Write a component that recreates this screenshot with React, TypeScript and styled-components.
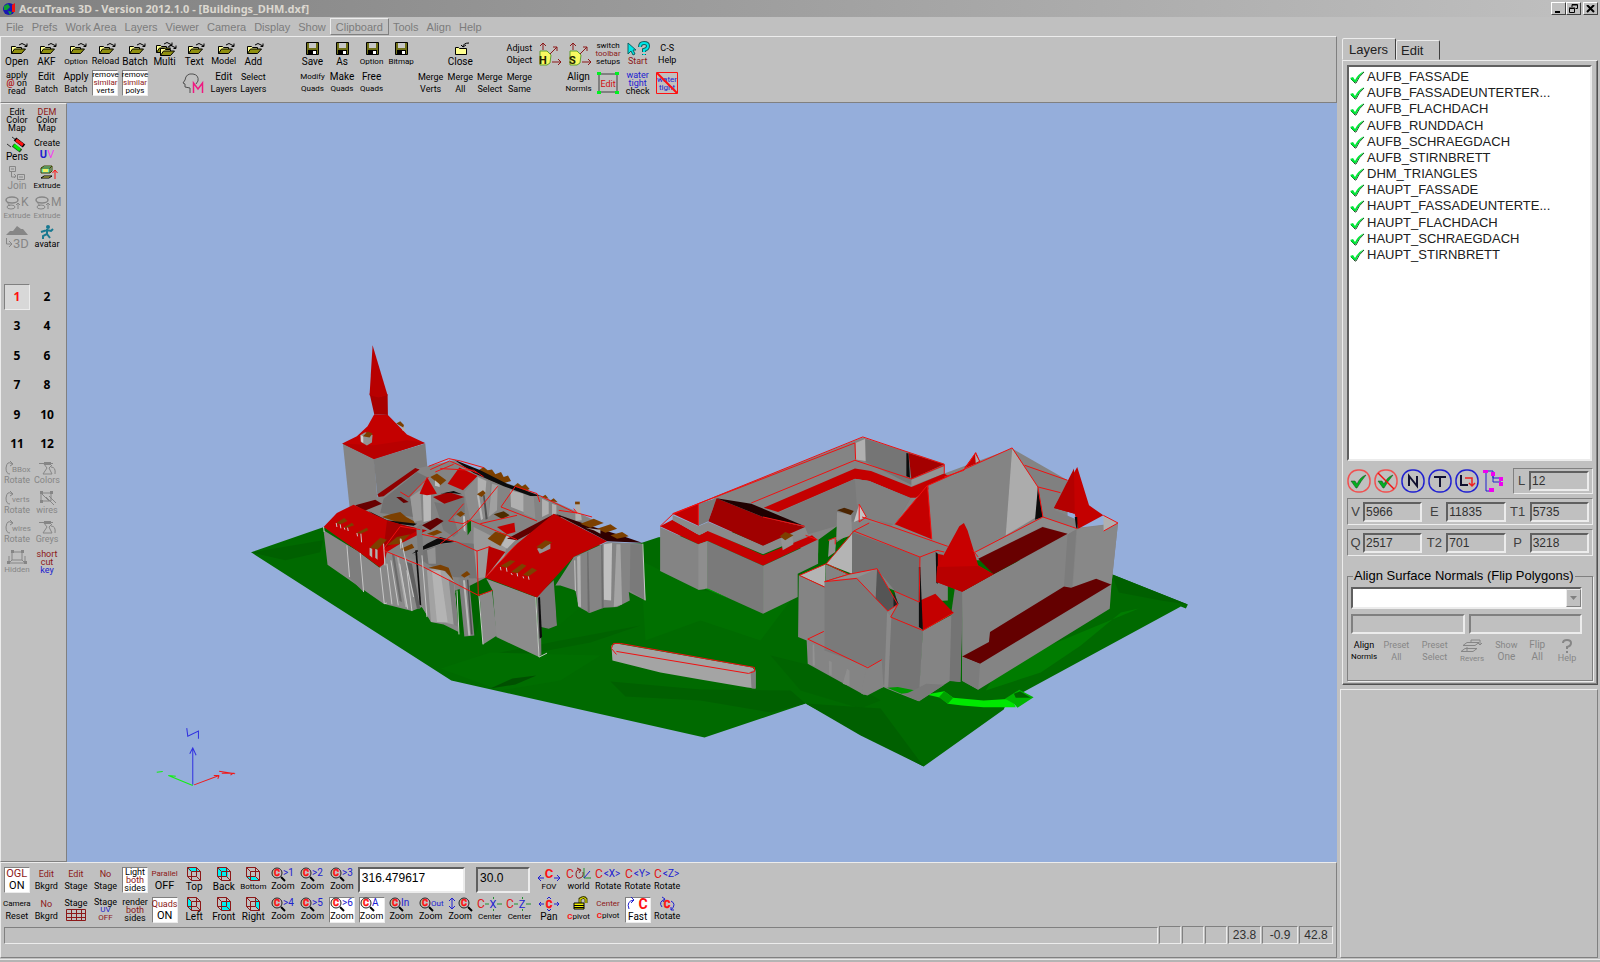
import React, { useState } from 'react';
import styled, { createGlobalStyle, css } from 'styled-components';

const face = '#c0c0c0';
const dark = '#808080';
const light = '#ececec';
const maroon = '#8c1818';
const blue = '#2020d0';
const red = '#ff1010';
const grey = '#868686';

const sunken = css`
  border: 1px solid;
  border-color: ${dark} ${light} ${light} ${dark};
`;
const raised = css`
  border: 1px solid;
  border-color: ${light} ${dark} ${dark} ${light};
`;

const GlobalStyle = createGlobalStyle`
  * { box-sizing: border-box; }
  body { margin: 0; background: ${face}; font-family: "Liberation Sans", Arial, sans-serif; color: #000; }
  button, input, select { font: inherit; color: inherit; margin: 0; padding: 0; }
`;

/* ---------- frame ---------- */

const Window = styled.div`
  display: flex;
  flex-direction: column;
  min-height: 100vh;
  background: ${face};
`;
const TitleBar = styled.header`
  display: flex;
  align-items: center;
  height: 17px;
  padding: 0 2px 0 3px;
  gap: 2px;
  background: linear-gradient(90deg, #808080, #c0c0c0);
`;
const Title = styled.h1`
  flex: 1;
  margin: 0;
  font: bold 11px/16px "Noto Sans", sans-serif;
  color: #dcd8d0;
`;
const WindowButton = styled.button<{ $apart?: boolean }>`
  width: 15px;
  height: 13px;
  margin-left: ${p => (p.$apart ? 0 : -2)}px;
  background: ${face};
  border: 1px solid;
  border-color: #fff #404040 #404040 #fff;
  display: grid;
  place-items: center;
`;
const MenuBar = styled.nav`
  display: flex;
  align-items: center;
  height: 19px;
  padding-left: 2px;
`;
const MenuItem = styled.button<{ $raised?: boolean }>`
  height: 17px;
  padding: 0 ${p => (p.$raised ? 5 : 3)}px;
  background: none;
  font-size: 11px;
  line-height: 17px;
  color: #7c7c7c;
  border: 1px solid transparent;
  ${p => p.$raised && raised}
`;
const Body = styled.div`
  display: flex;
  flex: 1;
  gap: 3px;
`;
const Workspace = styled.main`
  flex: 1;
  min-width: 0;
  display: flex;
  flex-direction: column;
`;
const Toolbar = styled.section`
  ${raised}
  padding: 4px 1px 6px;
`;
const ToolGrid = styled.div<{ $gap: number }>`
  display: grid;
  width: 680px;
  grid-template-columns: repeat(23, 1fr);
  grid-auto-rows: 26px;
  row-gap: ${p => p.$gap}px;
  justify-items: center;
`;
const Middle = styled.div`
  flex: 1;
  display: flex;
`;
const SideBar = styled.section`
  width: 67px;
  ${raised}
  padding: 1px;
`;
const SideGrid = styled.div`
  display: grid;
  width: 60px;
  height: 472px;
  grid-template-columns: 1fr 1fr;
  grid-template-rows: repeat(16, 1fr);
  place-items: center;
`;
const Viewport = styled.div`
  flex: 1;
  min-width: 0;
  display: flex;
  background: #95aedb;
  svg { width: 100%; height: 100%; min-height: 600px; }
`;
const BottomPanel = styled.section`
  ${raised}
  padding: 4px 1px 13px;
`;
const WindowEdge = styled.footer`
  height: 5px;
  border-top: 1px solid ${face};
  background: linear-gradient(#e8e8e8 0 1px, #b4b4b4 1px);
`;

/* ---------- tool tiles ---------- */

const Tile = styled.button<{ $on?: boolean; $off?: boolean; $col?: number; $row?: number }>`
  grid-column: ${p => p.$col ?? 'auto'};
  grid-row: ${p => p.$row ?? 'auto'};
  display: flex;
  flex-direction: column;
  align-items: center;
  justify-content: center;
  width: 26px;
  height: 26px;
  border: 1px solid transparent;
  white-space: nowrap;
  background: none;
  color: ${p => (p.$off ? grey : '#000')};
  font-family: Roboto, "Liberation Sans", sans-serif;
  ${p => p.$on && css`
    background: #fff;
    border-color: ${dark} ${light} ${light} ${dark};
  `}
  svg { flex: none; overflow: visible; }
`;
const Line = styled.span<{ $size: number; $lh: number; $color?: string }>`
  font-size: ${p => p.$size}px;
  line-height: ${p => p.$lh}px;
  color: ${p => p.$color ?? 'inherit'};
`;
const Initial = styled.b<{ $color?: string }>`
  color: ${p => p.$color};
`;
const NumberTile = styled(Tile)`
  font: bold 12px/24px "Noto Sans", sans-serif;
  ${p => p.$on && css`
    color: ${red};
    background: #d8d8d8;
  `}
`;

/* A line is its text, size and colour; with a fourth entry the third one colours
   the first letter only and the fourth colours the rest. */
type Text = [string, number, string?, string?];
type Tool = { at?: [number, number]; icon?: React.ReactNode; text: Text[]; on?: boolean; off?: boolean };

function ToolTile({ at, icon, text, on, off }: Tool) {
  const lh = icon ? 11 : Math.floor(24 / Math.max(text.length, 2));
  return (
    <Tile type="button" $on={on} $off={off} disabled={off} $col={at?.[0]} $row={at?.[1]}>
      {icon}
      {text.map(([t, size, color, rest]) => (
        <Line key={t} $size={size} $lh={lh} $color={rest ?? color}>
          {rest ? <><Initial $color={color}>{t[0]}</Initial>{t.slice(1)}</> : t}
        </Line>
      ))}
    </Tile>
  );
}

const Glyph = ({ children, h = 14 }: { children: React.ReactNode; h?: number }) => (
  <svg width="28" height={h} viewBox={`0 0 28 ${h}`} fill="none" stroke="#000" aria-hidden="true" fontFamily="Roboto, sans-serif">{children}</svg>
);

/* ---------- icons ---------- */

const FolderShape = () => (
  <>
    <path d="M8.500 11.500v-7h4l1 1h5v2" fill="#ffff90" />
    <path d="M8.500 11.500l3-4.500h11l-4 4.500z" fill="#909010" />
    <path d="M16 3q3-3 6 0l2 1M21.500 4.500h2.500v-3" />
  </>
);
const Folder = () => <Glyph><FolderShape /></Glyph>;
const Folders = () => (
  <Glyph>
    <g transform="translate(-3 -1)"><FolderShape /></g>
    <g transform="translate(1 2)"><FolderShape /></g>
  </Glyph>
);
const ClosedFolder = () => (
  <Glyph>
    <path d="M9.500 12.500v-7h3l1 1h7v6z" fill="#ffff90" />
    <path d="M17 5q0-4 6-4M17 5l-2-2M17 5l3-2" />
  </Glyph>
);
const Disk = () => (
  <Glyph>
    <path d="M8.500 0.500h12v12h-12z" fill="#707018" />
    <path d="M11 1h7v5h-7z" fill="#c8c8c8" stroke="none" />
    <path d="M10 8h9v5h-9z" fill="#000" stroke="none" />
    <path d="M15 9h3v3h-3z" fill="#fff" stroke="none" />
  </Glyph>
);
const HeadM = () => (
  <Glyph h={24}>
    <path d="M10 22v-5l-5-1v-3l-2-1 2-3q1-7 8-6 6 1 5 7l-2 3" stroke="#505050" />
    <path d="M13.500 22v-10l4.500 6 4.500-6v10" stroke="#f01880" strokeWidth="1.500" />
  </Glyph>
);
const Blob = ({ letter }: { letter: string }) => (
  <Glyph h={24}>
    <path d="M8 1v7M5 4l3-3 3 3M15 12l7-7M18 5h4v4M17 20h9M23 17l3 3-3 3" stroke={maroon} />
    <path d="M5 9h7l4 4-1 8-3 2h-7z" fill="#f8f860" stroke="#60a030" />
    <text x="4" y="22" fontSize="11" fontWeight="bold" fill="#202000" stroke="none">{letter}</text>
  </Glyph>
);
const PointerHelp = () => (
  <Glyph>
    <path d="M4 1v11l3-3 2 4 2-1-2-4h3z" fill="#00e8e8" stroke="#106060" />
    <path d="M16 5q0-4 4-4t4 3-4 4v2M20 12v1" stroke="#106060" strokeWidth="4" />
    <path d="M16 5q0-4 4-4t4 3-4 4v2M20 12v1" stroke="#00e8e8" strokeWidth="2" />
  </Glyph>
);
const EditFrame = () => (
  <Glyph h={24}>
    <path d="M5 3h18v18h-18z" stroke="#404040" />
    <path d="M3 1h4v3h-4zM21 1h4v3h-4zM3 20h4v3h-4zM21 20h4v3h-4z" fill="#00f020" stroke="none" />
    <text x="14" y="16" fontSize="9" textAnchor="middle" fill="#d01010" stroke="none">Edit</text>
  </Glyph>
);
const NotWaterTight = () => (
  <Glyph h={24}>
    <text x="14" y="11" fontSize="8" textAnchor="middle" fill={blue} stroke="none">water</text>
    <text x="14" y="19" fontSize="8" textAnchor="middle" fill={blue} stroke="none">tight</text>
    <path d="M3.500 1.500h21v21h-21z" stroke={red} /><path d="M4 2l20 20" stroke={red} strokeWidth="2" />
  </Glyph>
);
const Pens = () => (
  <Glyph>
    <path d="M9 0l4 3M4 7l4 3" stroke="#303030" />
    <path d="M12 2l9 7" stroke="#000" strokeWidth="4" />
    <path d="M13 3l7 5" stroke={red} strokeWidth="3" />
    <path d="M10 8l8 6" stroke="#205020" strokeWidth="4" />
    <path d="M11 8l6 5" stroke="#00f000" strokeWidth="3" />
  </Glyph>
);
const JoinBoxes = () => (
  <Glyph>
    <path d="M6.500 0.500h6v5h-6zM14.500 8.500h7v5h-7zM8 3h3M16 11h4M8.500 6v5h4M11 8l2 2-2 2" stroke={grey} />
  </Glyph>
);
const ExtrudeBox = () => (
  <Glyph>
    <path d="M8 2l3-2h8l-2 2v5h-9zM8 2h9M17 7l2-2v-5" fill="#70e8b0" stroke="#404000" />
    <path d="M10 3h5v3h-5z" fill="#f0f060" stroke="none" />
    <path d="M8 12l3-2h8l-3 2z" fill="#f0f060" stroke="#000" />
    <path d="M22 13v-9M19.500 7l2.500-3 2.500 3" stroke={red} />
  </Glyph>
);
const ExtrudeRing = ({ letter }: { letter: string }) => (
  <Glyph>
    <ellipse cx="9" cy="4" rx="6" ry="3" stroke={grey} strokeWidth="1.500" />
    <ellipse cx="8" cy="11" rx="4" ry="2" stroke={grey} />
    <path d="M4 6l3 4M15 13v-5M13 9l2-2 2 2" stroke={grey} />
    <text x="18" y="10" fontSize="12" fill={grey} stroke="none">{letter}</text>
  </Glyph>
);
const Terrain = () => (
  <Glyph h={11}><path d="M3 9l4-4 3 0 4-5 4 3 2 0 5 6z" fill={grey} stroke="none" /></Glyph>
);
const To3D = () => (
  <Glyph h={13}>
    <path d="M3.500 1v6h5M6 4l3 3-3 3" stroke={grey} />
    <text x="10" y="11" fontSize="13" fill={grey} stroke="none">3D</text>
  </Glyph>
);
const Avatar = () => (
  <Glyph>
    <path d="M14 4v5l-4 2v3M14 9l3 4M8 7l6-2 4 1 2-2" stroke="#187890" strokeWidth="2" />
    <circle cx="15" cy="2" r="2" fill="#187890" stroke="none" />
  </Glyph>
);
const GreyTurn = ({ label }: { label: string }) => (
  <Glyph>
    <path d="M9 3q-5-4-6 4 0 6 4 6M7 0l3 3-3 2" stroke={grey} />
    <text x="9" y="11" fontSize="8" fill={grey} stroke="none">{label}</text>
  </Glyph>
);
const Spray = () => (
  <Glyph>
    <path d="M6 2.500h14M11 3l3 4-4 6h9l-3-6 3-3M18 6q5 0 4 7" stroke={grey} />
    <path d="M11 1h7v3h-7z" fill={grey} stroke="none" />
  </Glyph>
);
const WirePen = () => (
  <Glyph>
    <path d="M8 2h10v8h-10zM8 2l8 8M13 6l8 8M16 5l7 7" stroke={grey} />
    <path d="M7 0h3v3h-3zM17 0h3v3h-3zM7 9h3v3h-3z" fill={grey} stroke="none" />
  </Glyph>
);
const HiddenBox = () => (
  <Glyph>
    <path d="M9 2h10v8h-10zM9 10l-3 3M19 10l3 3M22 13h-16M6 6v7M22 6v7" stroke={grey} />
    <path d="M8 0h3v3h-3zM18 0h3v3h-3zM4 11h3v3h-3zM21 11h3v3h-3z" fill={grey} stroke="none" />
  </Glyph>
);
const faces: Record<string, string> = {
  Top: 'M7 1h9l4 4h-9z', Back: 'M8 1h10v9h-10z', Bottom: 'M7 10h9l4 3h-9z',
  Left: 'M8 1l3 3v9l-3-3z', Front: 'M11 5h9v8h-9z', Right: 'M17 2l3 3v8l-3-3z',
};
const Cube = ({ side }: { side: string }) => (
  <Glyph>
    <path d={faces[side]} fill="#00f0f0" stroke="none" />
    <path d="M7.500 0.500h9v9h-9zM11.500 4.500h9v9h-9zM7.500 0.500l4 4M16.500 0.500l4 4M7.500 9.500l4 4M16.500 9.500l4 4" stroke={maroon} />
  </Glyph>
);
const Lens = ({ x = 8 }: { x?: number }) => (
  <>
    <circle cx={x} cy="6" r="5" stroke="#202020" />
    <path d={`M${x + 4} 10l4 4`} strokeWidth="2" />
    <text x={x} y="9" fontSize="9" fontWeight="bold" textAnchor="middle" fill={red} stroke={red} strokeWidth="0.500">C</text>
  </>
);
const Zoom = ({ tag }: { tag: string }) => (
  <Glyph>
    <Lens />
    <text x="14" y="9" fontSize={tag.length > 2 ? 8 : 10} fill={blue} stroke="none">{tag}</text>
  </Glyph>
);
const ZoomDrag = () => (
  <Glyph>
    <path d="M6 1v11M3 4l3-3 3 3M3 9l3 3 3-3" stroke={blue} />
    <Lens x={18} />
  </Glyph>
);
const CameraAxis = ({ axis, color = blue }: { axis: string; color?: string }) => (
  <Glyph>
    <text x="1" y="11" fontSize="12" fill="#e01818" stroke="none">C</text>
    <text x="18" y="10" fontSize="10" textAnchor="middle" fill={color} stroke="none">{axis}</text>
  </Glyph>
);
const CenterAxis = ({ axis }: { axis: string }) => (
  <Glyph>
    <text x="1" y="11" fontSize="12" fill="#e01818" stroke="none">C</text>
    <path d="M9 7h4M21 7h5M17.500 0v2M17.500 12v2" stroke="#209030" />
    <text x="17" y="11" fontSize="11" textAnchor="middle" fill={blue} stroke="none">{axis}</text>
  </Glyph>
);
const Fov = () => (
  <Glyph>
    <path d="M9 11h-6M6 8l-3 3 3 3M19 11h6M22 8l3 3-3 3" stroke={blue} />
    <text x="14" y="11" fontSize="13" fontWeight="bold" textAnchor="middle" fill={red} stroke="none">C</text>
  </Glyph>
);
const WorldAxes = () => (
  <Glyph>
    <text x="1" y="11" fontSize="12" fill="#e01818" stroke="none">C</text>
    <path d="M15 3q-4-1-4 4t4 4 3-6M12 1l4 2-2 3" stroke={maroon} />
    <path d="M19 1v10h7" stroke="#209030" /><path d="M19 11l6-7" stroke={blue} />
  </Glyph>
);
const Pan = () => (
  <Glyph>
    <path d="M9 7h-5M6 5l-2 2 2 2M19 7h5M22 5l2 2-2 2M12 2l2-2 2 2M12 12l2 2 2-2" stroke={blue} />
    <text x="14" y="11" fontSize="10" fontWeight="bold" textAnchor="middle" fill={red} stroke={red} strokeWidth="0.500">C</text>
  </Glyph>
);
const Padlock = () => (
  <Glyph>
    <path d="M15 6v-4q4-3 6 0v4" stroke="#404000" strokeWidth="3" />
    <path d="M15 6v-4q4-3 6 0v4" stroke="#f0f000" />
    <path d="M9 6h10v6h-10z" fill="#f0f000" /><path d="M9 8.500h10M9 10.500h10" />
  </Glyph>
);
const FastTurn = () => (
  <Glyph>
    <path d="M5 12q-3-8 5-9M7 0l3 3-3 3" stroke={blue} />
    <text x="19" y="12" fontSize="14" fontWeight="bold" textAnchor="middle" fill={red} stroke="none">C</text>
  </Glyph>
);
const SlowTurn = () => (
  <Glyph>
    <path d="M9 10q-4-5 3-8M9 0l3 2-2 3M18 4q6 3 0 9M21 13h-3v-3" stroke={blue} />
    <text x="14" y="11" fontSize="10" fontWeight="bold" textAnchor="middle" fill={red} stroke={red} strokeWidth="0.500">C</text>
  </Glyph>
);
const GridMesh = () => (
  <Glyph h={12}><path d="M4.500 0.500h19v11h-19zM4 4.500h20M4 8.500h20M9.500 0v12M14.500 0v12M19.500 0v12" stroke={maroon} /></Glyph>
);
const Reverse = () => (
  <Glyph>
    <path d="M9 3.500h12l-4 3h-12zM7 9.500h12l-4 3h-12zM13 3v-2h9v5M20 4l2 2 2-2M9 12v-4" stroke={grey} />
  </Glyph>
);
const Question = () => (
  <Glyph>
    <path d="M10 4q0-3 4-3t4 3-4 4v2M14 12v2" stroke={grey} strokeWidth="2" />
  </Glyph>
);
const Tick = () => (
  <svg width="15" height="14" viewBox="0 0 15 14" fill="none" aria-hidden="true">
    <path d="M1 9l4 4 1 0q3-7 8-11" stroke="#205028" />
    <path d="M0 8l3-1 2 3q3-6 9-9-5 5-8 11h-2z" fill="#00e838" />
  </svg>
);

/* ---------- tool data ---------- */

const topTools: Tool[] = [
  { at: [1, 1], icon: <Folder />, text: [['Open', 10]] },
  { at: [2, 1], icon: <Folder />, text: [['AKF', 10]] },
  { at: [3, 1], icon: <Folder />, text: [['Option', 8]] },
  { at: [4, 1], icon: <Folder />, text: [['Reload', 9]] },
  { at: [5, 1], icon: <Folder />, text: [['Batch', 10]] },
  { at: [6, 1], icon: <Folders />, text: [['Multi', 10]] },
  { at: [7, 1], icon: <Folder />, text: [['Text', 10]] },
  { at: [8, 1], icon: <Folder />, text: [['Model', 9]] },
  { at: [9, 1], icon: <Folder />, text: [['Add', 10]] },
  { at: [11, 1], icon: <Disk />, text: [['Save', 10]] },
  { at: [12, 1], icon: <Disk />, text: [['As', 10]] },
  { at: [13, 1], icon: <Disk />, text: [['Option', 8]] },
  { at: [14, 1], icon: <Disk />, text: [['Bitmap', 8]] },
  { at: [16, 1], icon: <ClosedFolder />, text: [['Close', 10]] },
  { at: [18, 1], text: [['Adjust', 9], ['Object', 9]] },
  { at: [19, 1], icon: <Blob letter="H" />, text: [] },
  { at: [20, 1], icon: <Blob letter="S" />, text: [] },
  { at: [21, 1], text: [['switch', 8], ['toolbar', 8, maroon], ['setups', 8]] },
  { at: [22, 1], icon: <PointerHelp />, text: [['Start', 9, maroon]] },
  { at: [23, 1], text: [['C-S', 9], ['Help', 9]] },
  { at: [1, 2], text: [['apply', 9], ['@ on', 9, '#b01818', '#000']  , ['read', 9]] },
  { at: [2, 2], text: [['Edit', 10], ['Batch', 9]] },
  { at: [3, 2], text: [['Apply', 10], ['Batch', 9]] },
  { at: [4, 2], on: true, text: [['remove', 8], ['similar', 8, maroon], ['verts', 8]] },
  { at: [5, 2], on: true, text: [['remove', 8], ['similar', 8, maroon], ['polys', 8]] },
  { at: [7, 2], icon: <HeadM />, text: [] },
  { at: [8, 2], text: [['Edit', 10], ['Layers', 9]] },
  { at: [9, 2], text: [['Select', 9], ['Layers', 9]] },
  { at: [11, 2], text: [['Modify', 8], ['Quads', 8]] },
  { at: [12, 2], text: [['Make', 10], ['Quads', 8]] },
  { at: [13, 2], text: [['Free', 10], ['Quads', 8]] },
  { at: [15, 2], text: [['Merge', 9], ['Verts', 9]] },
  { at: [16, 2], text: [['Merge', 9], ['All', 9]] },
  { at: [17, 2], text: [['Merge', 9], ['Select', 9]] },
  { at: [18, 2], text: [['Merge', 9], ['Same', 9]] },
  { at: [20, 2], text: [['Align', 10], ['Normls', 8]] },
  { at: [21, 2], icon: <EditFrame />, text: [] },
  { at: [22, 2], text: [['water', 9, blue], ['tight', 9, blue], ['check', 9]] },
  { at: [23, 2], icon: <NotWaterTight />, text: [] },
];

const sideTools: Tool[] = [
  { text: [['Edit', 9], ['Color', 9], ['Map', 9]] },
  { text: [['DEM', 9, maroon], ['Color', 9], ['Map', 9]] },
  { icon: <Pens />, text: [['Pens', 10]] },
  { text: [['Create', 9], ['UV', 11, blue, '#f040f0']] },
  { icon: <JoinBoxes />, text: [['Join', 10]], off: true },
  { icon: <ExtrudeBox />, text: [['Extrude', 8]] },
  { icon: <ExtrudeRing letter="K" />, text: [['Extrude', 8]], off: true },
  { icon: <ExtrudeRing letter="M" />, text: [['Extrude', 8]], off: true },
  { icon: <><Terrain /><To3D /></>, text: [], off: true },
  { icon: <Avatar />, text: [['avatar', 9]] },
];
const sideLower: Tool[] = [
  { icon: <GreyTurn label="BBox" />, text: [['Rotate', 9]], off: true },
  { icon: <Spray />, text: [['Colors', 9]], off: true },
  { icon: <GreyTurn label="verts" />, text: [['Rotate', 9]], off: true },
  { icon: <WirePen />, text: [['wires', 9]], off: true },
  { icon: <GreyTurn label="wires" />, text: [['Rotate', 9]], off: true },
  { icon: <Spray />, text: [['Greys', 9]], off: true },
  { icon: <HiddenBox />, text: [['Hidden', 8]], off: true },
  { text: [['short', 9, maroon], ['cut', 9, maroon], ['key', 9, blue]] },
];

const bottomTools: Tool[] = [
  { at: [1, 1], on: true, text: [['OGL', 11, maroon], ['ON', 11]] },
  { at: [2, 1], text: [['Edit', 9, maroon], ['Bkgrd', 9]] },
  { at: [3, 1], text: [['Edit', 9, maroon], ['Stage', 9]] },
  { at: [4, 1], text: [['No', 9, maroon], ['Stage', 9]] },
  { at: [5, 1], on: true, text: [['Light', 9], ['both', 9, maroon], ['sides', 9]] },
  { at: [6, 1], text: [['Parallel', 8, maroon], ['OFF', 11]] },
  { at: [7, 1], icon: <Cube side="Top" />, text: [['Top', 10]] },
  { at: [8, 1], icon: <Cube side="Back" />, text: [['Back', 10]] },
  { at: [9, 1], icon: <Cube side="Bottom" />, text: [['Bottom', 8]] },
  { at: [10, 1], icon: <Zoom tag=">1" />, text: [['Zoom', 9]] },
  { at: [11, 1], icon: <Zoom tag=">2" />, text: [['Zoom', 9]] },
  { at: [12, 1], icon: <Zoom tag=">3" />, text: [['Zoom', 9]] },
  { at: [19, 1], icon: <Fov />, text: [['FOV', 8]] },
  { at: [20, 1], icon: <WorldAxes />, text: [['world', 9]] },
  { at: [21, 1], icon: <CameraAxis axis="<X>" />, text: [['Rotate', 9]] },
  { at: [22, 1], icon: <CameraAxis axis="<Y>" />, text: [['Rotate', 9]] },
  { at: [23, 1], icon: <CameraAxis axis="<Z>" />, text: [['Rotate', 9]] },
  { at: [1, 2], text: [['Camera', 8], ['Reset', 9]] },
  { at: [2, 2], text: [['No', 9, maroon], ['Bkgrd', 9]] },
  { at: [4, 2], text: [['Stage', 9], ['UV', 8, blue], ['OFF', 8, maroon]] },
  { at: [5, 2], text: [['render', 9], ['both', 9, maroon], ['sides', 9]] },
  { at: [6, 2], on: true, text: [['Quads', 9, maroon], ['ON', 11]] },
  { at: [7, 2], icon: <Cube side="Left" />, text: [['Left', 10]] },
  { at: [8, 2], icon: <Cube side="Front" />, text: [['Front', 10]] },
  { at: [9, 2], icon: <Cube side="Right" />, text: [['Right', 10]] },
  { at: [10, 2], icon: <Zoom tag=">4" />, text: [['Zoom', 9]] },
  { at: [11, 2], icon: <Zoom tag=">5" />, text: [['Zoom', 9]] },
  { at: [12, 2], on: true, icon: <Zoom tag=">6" />, text: [['Zoom', 9]] },
  { at: [13, 2], on: true, icon: <Zoom tag=" A" />, text: [['Zoom', 9]] },
  { at: [14, 2], icon: <Zoom tag="In" />, text: [['Zoom', 9]] },
  { at: [15, 2], icon: <Zoom tag="Out" />, text: [['Zoom', 9]] },
  { at: [16, 2], icon: <ZoomDrag />, text: [['Zoom', 9]] },
  { at: [17, 2], icon: <CenterAxis axis="X" />, text: [['Center', 8]] },
  { at: [18, 2], icon: <CenterAxis axis="Z" />, text: [['Center', 8]] },
  { at: [19, 2], icon: <Pan />, text: [['Pan', 10]] },
  { at: [20, 2], icon: <Padlock />, text: [['Cpivot', 8, red, '#000']] },
  { at: [21, 2], text: [['Center', 8, maroon], ['Cpivot', 8, red, '#000']] },
  { at: [22, 2], on: true, icon: <FastTurn />, text: [['Fast', 10]] },
  { at: [23, 2], icon: <SlowTurn />, text: [['Rotate', 9]] },
];

const alignTools: Tool[] = [
  { text: [['Align', 9], ['Normls', 8]] },
  { text: [['Preset', 9], ['All', 9]], off: true },
  { text: [['Preset', 9], ['Select', 9]], off: true },
  { icon: <Reverse />, text: [['Revers', 8]], off: true },
  { text: [['Show', 9], ['One', 10]], off: true },
  { text: [['Flip', 10], ['All', 10]], off: true },
  { icon: <Question />, text: [['Help', 9]], off: true },
];

/* ---------- bottom panel parts ---------- */

const Field = styled.input`
  min-width: 0;
  width: 100%;
  border: 2px solid;
  border-color: #606060 ${light} ${light} #606060;
  border-radius: 0;
  padding: 0 2px;
  font-size: 12px;
  outline: none;
`;
const FocalField = styled(Field)`
  grid-area: 1 / 13 / 2 / 17;
  justify-self: start;
  width: 107px;
  margin-left: 1px;
  padding-bottom: 4px;
  background: #fff;
`;
const AngleField = styled(Field)`
  grid-area: 1 / 17 / 2 / 19;
  justify-self: start;
  width: 54px;
  margin-left: 1px;
  padding-bottom: 4px;
  background: ${face};
`;
const StageMeshTile = styled(Tile)`
  justify-content: flex-start;
`;
const StatusBar = styled.div`
  display: flex;
  align-items: flex-end;
  gap: 1px;
  height: 18px;
  margin: 3px 2px 0;
`;
const StatusMessage = styled.div`
  flex: 1;
  height: 17px;
  ${sunken}
`;
const StatusCell = styled.div<{ $w: number }>`
  width: ${p => p.$w}px;
  height: 18px;
  ${sunken}
  font-size: 12px;
  line-height: 17px;
  text-align: center;
  color: #303030;
`;

/* ---------- right panel ---------- */

const Inspector = styled.aside`
  width: 260px;
  display: flex;
  flex-direction: column;
  padding: 2px 2px 0 2px;
`;
const Tabs = styled.div`
  display: flex;
  align-items: flex-end;
  height: 22px;
`;
const Tab = styled.button<{ $active?: boolean }>`
  height: ${p => (p.$active ? 22 : 20)}px;
  width: ${p => (p.$active ? 54 : 44)}px;
  padding-left: ${p => (p.$active ? 6 : 4)}px;
  text-align: left;
  font-size: 13px;
  color: #202020;
  background: ${face};
  border: 1px solid;
  border-color: ${light} #404040 transparent ${light};
  border-radius: 2px 2px 0 0;
`;
const TabPage = styled.div`
  border: 1px solid;
  border-color: ${light} #505050 #505050 ${light};
  box-shadow: inset -1px -1px ${dark};
  padding: 4px 4px 3px;
  display: flex;
  flex-direction: column;
  gap: 4px;
`;
const LayerList = styled.ul`
  height: 396px;
  margin: 0 1px 3px 0;
  padding: 2px 1px;
  list-style: none;
  background: #fff;
  border: 2px solid;
  border-color: #606060 ${light} ${light} #606060;
`;
const LayerRows = styled.div`
  display: grid;
  grid-auto-rows: 1fr;
  height: 194px;
`;
const Layer = styled.li`
  display: flex;
  align-items: center;
  gap: 2px;
  font-size: 13px;
  line-height: 16px;
  color: #202020;
`;
const MarkRow = styled.div`
  display: flex;
  align-items: center;
  gap: 3px;
  height: 26px;
`;
const Mark = styled.button`
  width: 24px;
  height: 24px;
  border: 0;
  background: none;
`;
const StatRow = styled.div<{ $single?: boolean }>`
  display: grid;
  grid-template-columns: ${p => (p.$single ? '15px 1fr' : '15px 1fr 24px 1fr 24px 1fr')};
  align-items: center;
  ${p => p.$single && 'width: 80px; margin-left: auto;'}
  height: ${p => (p.$single ? 26 : 27)}px;
  padding: 0 3px 0 0;
  ${sunken}
`;
const StatLabel = styled.label`
  text-align: center;
  font-size: 13px;
  line-height: 16px;
  color: #404040;
`;
const StatField = styled(Field)`
  height: 20px;
  padding: 0 1px;
  background: ${face};
  color: #303030;
`;
const Group = styled.fieldset`
  min-width: 0;
  margin: 8px 0 0;
  padding: 3px 10px 16px 3px;
  border: 1px solid ${dark};
  box-shadow: 1px 1px ${light};
`;
const Legend = styled.legend`
  margin-left: 2px;
  padding: 0 1px;
  font-size: 13px;
  line-height: 16px;
`;
const SelectWrap = styled.div`
  position: relative;
  height: 22px;
`;
const Select = styled.select`
  appearance: none;
  width: 100%;
  height: 22px;
  background: #fff;
  border: 2px solid;
  border-color: #606060 ${light} ${light} #606060;
  border-radius: 0;
`;
const Arrow = styled.span`
  position: absolute;
  right: 1px;
  top: 2px;
  width: 15px;
  height: 18px;
  display: grid;
  place-items: center;
  background: ${face};
  ${raised}
  pointer-events: none;
`;
const FieldPair = styled.div`
  display: grid;
  grid-template-columns: 1fr 1fr;
  gap: 4px;
  margin: 5px 0 4px;
`;
const EmptyField = styled.output`
  height: 20px;
  border: 2px solid;
  border-color: ${dark} ${light} ${light} ${dark};
`;
const AlignRow = styled.div`
  display: grid;
  grid-template-columns: 26fr 39fr 38fr 37fr 32fr 30fr 30fr;
  justify-items: center;
`;
const Filler = styled.div`
  flex: 1;
  margin: 4px 0 0 -2px;
  ${raised}
`;

/* ---------- model ---------- */

type Face = [string, string];
const Faces = ({ list }: { list: Face[] }) => (
  <>{list.map(([fill, points], i) => <polygon key={i} fill={fill} points={points} />)}</>
);
const Edges = ({ list, color = '#f01010' }: { list: string[]; color?: string }) => (
  <g fill="none" stroke={color} strokeWidth="1">
    {list.map((points, i) => <polyline key={i} points={points} vectorEffect="non-scaling-stroke" />)}
  </g>
);

const G1 = '#7a7a7a', G2 = '#848484', G3 = '#939393', G4 = '#b0b0b0', R1 = '#c40000', R2 = '#a80000', R3 = '#680000', B1 = '#7c4000', K = '#0c0c0c';

const terrain: Face[] = [
  ['#006a00', '251,552 323,527 600,545 640,543 658,537 836,524 900,520 1111,574 1187,604 1185,608 1180,606 1007,700 1003,709 923,766 805,703 704,737 451,680'],
  ['#007000', '640,560 700,590 790,600 760,640 700,620 645,640'],
  ['#006200', '440,668 500,652 560,640 640,625 590,642 520,655'],
  ['#006e00', '440,668 490,652 600,655 560,680 500,690'],
  ['#005000', '490,688 512,678 536,675 515,684'],
  ['#006000', '610,681 700,689 790,690 805,703 770,712 700,700 625,696'],
  ['#006000', '251,552 285,560 320,552 323,540'],
  ['#006400', '770,655 830,670 880,700 860,708 800,690'],
  ['#007c00', '1000,665 1138,608 1120,612 1080,645 1040,672 985,690'],
  ['#006000', '1111,574 1187,604 1160,600 1118,592'],
  ['#006000', '805,703 880,708 923,766 860,735'],
];

const church: Face[] = [
  [G2, '308,340 402,386 412,515 415,560 328,530'],
  ['#7c7c7c', '400,386 555,340 562,420 530,415 412,500'],
  [G2, '412,500 530,415 640,390 720,430 900,495 1000,540 1060,570 940,620 830,650 740,740 715,795 650,790 560,740 430,660 330,530'],
  [R1, '306,340 350,318 382,288 402,252 443,254 500,313 554,338 401,386'],
  ['#b80000', '306,340 401,386 554,338 500,330 400,345'],
  [R2, '388,190 402,252 443,254 442,192 415,200'],
  ['#b80000', '397,45 388,195 415,202 442,195'],
  [G3, '361,314 375,306 397,314 395,337 380,346 362,335'],
  ['#d0d0d0', '361,314 369,318 369,338 362,333'],
  [B1, '368,318 382,304 397,310 388,322'],
  [G4, '484,288 493,290 494,303 486,300'], [B1, '468,280 480,273 491,284 489,292'],
  ['#727272', '430,505 500,450 530,425 560,440 510,500 520,560 420,548'],
  ['#900000', '415,500 412,492 525,413 538,418 430,498'],
  [R3, '345,525 405,508 425,520 372,542'],
  [R3, '468,500 482,500 505,515 490,518'],
  ['#9a9a9a', '510,500 540,480 545,570 520,575'],
  ['#b8b8b8', '548,490 572,490 572,570 550,575'],
  [R1, '560,440 538,490 560,495 590,490'],
  ['#767676', '582,515 610,520 672,500 675,590 640,620 610,600'],
  ['#a00000', '578,500 625,485 672,500 612,520'],
  [K, '600,490 640,482 665,492 630,487'],
  [B1, '570,440 590,430 618,450 600,465'],
  ['#c0c0c0', '584,450 598,462 598,470 584,466'],
  [R1, '622,460 657,412 712,437 668,480'],
  ['#8c8c8c', '712,437 750,455 745,560 690,570 672,485'],
  [G4, '712,440 738,452 735,490 712,490'],
  ['#b8b8b8', '710,495 716,495 728,565 722,570'],
  ['#505050', '728,495 733,495 742,565 736,568'],
  [B1, '710,492 728,480 736,488 724,500'],
  ['#a0a0a0', '755,460 772,465 770,540 745,560'],
  [G4, '810,480 850,490 850,545 812,530'],
  ['#909090', '850,490 880,500 885,565 850,550'],
  [G4, '905,505 925,515 925,550 905,560'],
  [G4, '935,520 948,525 948,550 935,555'],
  [B1, '715,420 730,410 742,420 755,418 765,432 782,425 790,440 803,436 812,452 780,462 740,445'],
  [B1, '820,468 832,458 845,468 855,462 868,476 850,484'],
  [B1, '905,500 915,493 925,505'], [B1, '928,512 940,504 952,516'],
  [K, '640,388 720,420 800,460 900,497 870,497 790,468 700,428'],
  ['#b0b0b0', '1005,520 1018,518 1024,570 1005,572'],
  [B1, '1004,514 1018,514 1018,522 1004,522'],
  ['#4c2c00', '760,552 790,543 808,555 785,566'],
  [R1, '770,590 822,577 825,605 800,612'],
  ['#9a9a9a', '700,590 800,640 790,690 740,740 700,745'],
  [B1, '742,625 765,604 800,612 780,647'],
  ['#b8b8b8', '800,614 825,630 800,655 784,645'],
  [G2, '640,560 672,545 680,600 655,610'], [B1, '648,552 662,542 674,550 660,560'], ['#c0c0c0', '668,558 674,558 676,605 670,600'],
  ['#006800', '680,570 692,573 692,600 682,615'],
  ['#600000', '545,585 590,562 610,572 570,600'],
  [B1, '425,560 450,552 480,545 498,560 520,572 525,582 470,575'],
  [K, '385,542 440,570 530,580 520,586 430,576'],
  [B1, '560,610 590,598 606,606 580,616'],
  [K, '515,670 560,640 600,620 648,634 600,640'],
  ['#747474', '520,672 600,642 650,636 700,640 710,745 640,740 560,700'],
  [G3, '560,660 585,650 587,700 565,700'],
  ['#600000', '800,625 940,552 965,558 830,630'],
  ['#888888', '250,600 355,664 418,712 435,660 530,690 570,720 590,740 640,740 655,905 610,882 572,875 545,830 515,842 430,820 262,703'],
  ['#7e7e7e', '318,643 362,668 370,785 330,745'],
  [R1, '250,590 290,548 340,523 440,570 500,588 560,600 480,640 440,665 430,702 418,711 355,664'],
  ['#a40000', '440,572 540,596 480,630 430,655'],
  ['#8a8a8a', '440,665 520,690 560,720 572,870 545,830 500,835 450,820'],
  ['#606060', '500,695 515,700 540,835 530,835'],
  [K, '525,660 530,660 543,825 538,823'],
  [G1, '528,590 545,580 550,690 535,700'],
  ['#a8a8a8', '470,680 476,682 502,830 495,830'],
  ['#6a6a6a', '455,670 462,672 485,815 478,812'],
  ['#a2a2a2', '560,720 600,710 640,750 655,885 615,877 572,875'],
  ['#b4b4b4', '575,722 600,720 622,875 590,875'],
  ['#808080', '625,745 640,755 655,890 640,882'],
  ['#006400', '645,780 690,765 740,740 760,780 725,840 705,915 655,905'],
  ['#808080', '655,745 685,735 702,915 672,918'], ['#b8b8b8', '668,750 674,750 690,915 684,915'], ['#505050', '680,748 684,748 697,912 692,912'],
  [B1, '565,712 600,703 625,712 640,752 615,722'],
  [B1, '662,735 680,722 690,732 672,742'],
  ['#8a8a8a', '718,795 755,780 770,915 728,942'],
  ['#8c8c8c', '738,745 885,800 896,980 768,920 757,780'],
  [G1, '888,798 940,750 950,885 925,895 902,890 903,975 896,975'],
  [K, '893,802 899,800 905,920 898,925'],
  ['#b80000', '745,648 795,665 735,742'],
  ['#c00000', '735,742 830,640 940,550 1100,633 1000,680 890,801'],
  ['#300000', '945,550 1060,590 1140,615 1205,637 1100,633'],
  [G2, '1000,680 1100,635 1205,640 1215,810 1165,785 1168,810 1130,830 1090,832 1048,848 1015,830 1005,780 960,765 945,765'],
  ['#c0c0c0', '1090,642 1115,638 1112,810 1090,808'], ['#a4a4a4', '1128,642 1140,642 1145,822 1120,830'],
  [G1, '1170,642 1205,642 1213,808 1168,780'], ['#b0b0b0', '1010,680 1020,675 1022,830 1012,828'],
  ['#6c6c6c', '1040,665 1044,663 1048,846 1042,846'], ['#6c6c6c', '1082,645 1086,642 1090,832 1084,834'],
  ['#006c00', '945,770 1003,785 1015,835 950,890'],
  [B1, '1020,580 1060,565 1090,578 1050,592'], [B1, '1070,595 1110,582 1130,595 1095,607'], [B1, '1110,615 1145,605 1165,618 1130,625'],
  ['#a8a8a8', '1035,592 1080,598 1080,610 1060,600'],
  [G3, '890,655 930,640 930,655 898,670'], [B1, '888,650 915,630 935,636 905,657'],
  [B1, '288,578 312,563 322,572 300,582'], [B1, '310,592 335,577 342,585 320,592'], [B1, '348,608 380,592 384,600 362,610'],
  [G4, '388,652 396,655 396,682 388,675'], [G4, '405,655 412,658 412,688 405,682'],
  [B1, '388,652 420,622 440,628 412,657'],
  [B1, '440,645 470,620 510,612 480,640'], [B1, '482,655 515,640 522,652 495,663'],
  [B1, '780,707 810,690 825,692 800,712'], [B1, '812,725 845,700 858,706 832,728'], [B1, '848,733 875,712 890,720 865,738'],
];
const churchEdges = [
  '565,408 625,385 660,392 730,412', '570,418 628,392 710,428', '585,425 640,402', '600,415 700,420 730,440',
  '480,485 505,500 545,460 565,440', '772,468 690,568 668,580 625,572 670,520', '825,468 782,530 890,572', '825,468 890,490 898,515',
  '690,570 740,590 830,628', '690,570 655,600 600,640', '430,660 540,705 714,795 757,780', '714,795 710,662 650,635 545,612',
  '710,662 750,648', '430,655 480,588 540,598', '735,742 825,645', '900,497 1000,545 1055,560', '720,580 830,555', '955,540 1010,548 1000,535',
];
const churchRims = [
  '420,712 432,820 440,818', '440,700 455,822', '452,690 474,825', '482,625 520,800', '478,700 502,835', '500,720 515,842',
  '650,780 656,912', '716,797 728,942', '886,800 896,980 920,968', '1207,640 1214,810', '1003,690 1005,782', '320,645 328,740', '360,668 370,785',
  '288,578 290,590', '300,582 302,594', '312,592 314,598', '322,592 324,602', '350,608 352,618', '362,610 364,636', '780,710 782,720', '798,712 800,724',
  '812,728 816,734', '830,728 832,738', '848,738 850,744', '864,738 866,748', '480,625 482,655', '430,640 434,705', '545,675 560,860', '250,590 252,605',
];

const castle: Face[] = [
  [G2, '205,230 622,52 850,130 850,160 1040,85 1195,180 1195,420 800,420 600,330 500,400 340,350 205,270'],
  ['#757575', '630,56 850,132 850,165 760,195 630,125'],
  ['#b0b0b0', '602,68 628,56 630,122 602,118'],
  [K, '744,98 750,100 754,172 744,168'],
  ['#a40000', '750,98 850,132 758,176'],
  [G3, '758,178 850,138 850,160 758,198'],
  [R1, '345,262 600,145 645,152 758,200 850,160 862,168 770,232 755,232 640,182 600,175 385,275'],
  [G1, '385,277 600,176 640,182 755,234 720,300 700,318 640,290 570,310 460,345'],
  ['#808080', '600,176 640,182 755,234 712,312 620,290 605,250'],
  ['#006800', '498,358 550,318 548,380 500,450 440,535 430,480 497,400'],
  [R1, '905,145 938,97 950,125'], [G4, '936,100 948,122 938,128'],
  [G2, '805,195 1040,85 1022,345 900,400 815,355'],
  ['#808080', '1075,135 1195,180 1160,270 1225,300 1225,325 1125,290 1110,200'],
  ['#acacac', '1040,85 1112,200 1108,290 1022,345'],
  [K, '1112,200 1126,290 1104,298'],
  [R1, '803,195 712,312 815,357'],
  [R1, '90,280 162,250 162,316'],
  [G1, '162,250 213,234 190,303 162,316'],
  [R1, '55,318 90,298 165,345 190,330 343,405 480,345 495,358 343,436 188,362 162,372'],
  ['#8a8a8a', '90,284 162,318 190,305 343,375 460,320 470,345 343,402 188,332 165,345 90,300'],
  ['#a00000', '213,234 190,303 343,376 460,320 343,290'],
  ['#200000', '213,234 310,250 460,318 343,290'],
  [G2, '55,320 162,372 188,362 188,505 162,508 55,452'],
  ['#8e8e8e', '162,372 188,362 188,505 162,508'],
  [G1, '188,362 343,436 343,580 188,505'],
  [G2, '343,436 497,360 497,430 440,460 440,530 343,580'],
  ['#00a000', '180,504 190,505 250,535 215,520'],
  [G3, '393,355 425,345 428,372 398,390'], [B1, '390,348 405,335 428,345 405,360'],
  [G3, '550,275 590,283 592,345 548,360'], ['#4c2400', '550,270 570,262 597,272 588,284'],
  ['#c4c4c4', '612,252 597,305 632,290'],
  [G3, '528,360 548,350 545,395 525,410'],
  ['#808080', '597,332 640,305 700,318 860,378 860,540 780,545 720,515 600,460'],
  [R1, '830,400 848,404 845,440 828,440'],
  [K, '826,395 832,400 832,490 828,488'],
  ['#b4b4b4', '597,335 520,430 592,460'],
  ['#707070', '592,335 782,410 780,545 715,515 660,445 592,460'],
  [G2, '515,484 582,462 662,445 720,552 700,590 515,600'],
  ['#767676', '710,510 782,545 790,630 700,590 720,552'],
  ['#909090', '525,480 582,462 655,448 605,472'],
  ['#b4b4b4', '445,465 518,432 517,500'], [G2, '518,432 580,462 518,482'],
  [G2, '443,465 515,500 520,482 605,474 692,572 700,590 790,630 778,842 690,805 680,800 625,823 468,730 465,660 441,650'],
  [G1, '515,485 605,474 692,572 685,800 640,740 515,690'],
  ['#555555', '662,445 720,552 692,572 658,535'], ['#202020', '708,515 722,550 708,560'],
  ['#929292', '486,672 488,735 482,735 482,672'],
  ['#8e8e8e', '527,720 535,725 535,765 528,762'], ['#8e8e8e', '578,745 585,750 585,797 566,790'],
  ['#848484', '632,742 675,718 680,800 635,825 618,820'],
  ['#757575', '700,590 790,630 780,842 693,800'],
  ['#8a8a8a', '690,575 702,590 693,800 682,798'],
  [G2, '790,630 876,580 882,500 902,512 895,785 868,780 778,842'],
  ['#747474', '870,575 880,500 902,512 895,785 865,782'],
  [G2, '900,514 988,462 1195,342 1225,322 1336,308 1318,490 1313,565 945,808 900,780'],
  ['#7c7c7c', '1195,342 1220,322 1208,500 1185,497'],
  ['#888888', '1222,324 1336,310 1318,490 1270,475 1210,503'],
  ['#8c8c8c', '935,398 1125,290 1222,325 1195,342 1125,318 945,415'],
  [R3, '945,415 1125,320 1195,340 988,462'],
  ['#640000', '900,708 975,665 978,635 1185,498 1205,502 1275,475 1317,492 950,730'],
  ['#7c7c7c', '900,710 950,731 945,808 900,782'],
  [G4, '1295,285 1336,308 1296,332'],
  [R1, '1222,140 1157,263 1215,280 1225,325 1295,285 1255,255'], ['#b40000', '1213,145 1157,263 1215,280'],
  [K, '1215,290 1222,290 1223,325 1219,322'],
  ['#c80000', '905,308 892,318 830,440 828,485 900,514 988,462 945,435 915,330'],
  ['#b80000', '830,440 945,437 988,462 900,514 828,485'],
  [R1, '782,540 825,520 876,577 790,630'], [K, '779,440 783,440 790,628 779,620'],
  ['#009800', '690,802 720,800 780,812 730,820'],
  ['#00e800', '800,822 850,812 875,832 960,840 1040,835 1050,860 960,860 900,855 860,850 840,832'],
  ['#00a000', '850,812 875,832 860,850 835,830'],
  ['#00b400', '1020,835 1060,808 1100,830 1055,862 1045,850'],
  ['#006400', '1045,820 1062,812 1092,832 1050,832'],
  ['#7a7a7a', '740,822 780,842 850,793 800,790'],
];
const castleEdges = [
  '55,318 90,282 162,250 622,50 850,132 850,160', '90,280 600,68 602,118', '310,248 600,120 758,176 850,135', '162,250 162,316',
  '805,195 1040,83 1112,200 1126,290', '850,170 905,150 938,97 950,125', '1075,135 1195,180', '1112,200 1175,217', '935,396 1126,290 1222,325',
  '712,312 803,195 815,357', '620,290 700,318 860,378', '597,332 782,410 830,390 850,395', '597,332 520,430 445,465 515,500', '597,332 640,308',
  '520,430 582,462 662,445 720,552 692,572 605,474 515,484 582,462', '782,410 780,545 710,512', '720,552 700,590 790,630 876,577',
  '513,633 468,656 636,742 675,718', '1295,285 1336,308 1296,332', '612,252 612,305 632,290 612,252', '525,360 545,352 545,372', '343,290 460,318', '462,345 495,358', '945,410 930,390',
];

const Model = () => (
  <svg viewBox="67 103 1269 758" preserveAspectRatio="xMidYMid meet" role="img" aria-label="Perspective view of the building model">
    <Faces list={terrain} />
    <g transform="translate(240 330) scale(0.333333)">
      <Faces list={church} />
      <Edges list={churchEdges} />
      <Edges color="#c8c8c8" list={churchRims} />
    </g>
    <g transform="translate(640 420) scale(0.357143 0.333333)">
      <Faces list={castle} />
      <Edges list={castleEdges} />
    </g>
    <polygon fill="#a4a4a4" points="611,645 616,643 752,667 755,671 755,688 747,687 700,679 660,672 612,660" />
    <polygon fill="#808080" points="750,671 755,669 755,688 751,688" />
    <Edges list={['616,654 611,648 613,643 620,643 754,667 754,671 748,673 616,651']} />
    <g transform="translate(145 715) scale(0.333333)" fill="none" strokeWidth="3">
      <path d="M143 208V97M134 115l9-18 10 22M125 38l3 24 32-15v23" stroke="#3030e0" />
      <path d="M143 210L70 180l22 2M35 170l18-2" stroke="#10f010" />
      <path d="M147 208L222 180l-16 0M218 190l4-10M222 167l48 8M230 173l34 0 -8 6" stroke="#f01818" />
    </g>
  </svg>
);

/* ---------- application ---------- */

const menus = ['File', 'Prefs', 'Work Area', 'Layers', 'Viewer', 'Camera', 'Display', 'Show', 'Clipboard', 'Tools', 'Align', 'Help'];
const layers = [
  'AUFB_FASSADE', 'AUFB_FASSADEUNTERTER...', 'AUFB_FLACHDACH', 'AUFB_RUNDDACH', 'AUFB_SCHRAEGDACH', 'AUFB_STIRNBRETT',
  'DHM_TRIANGLES', 'HAUPT_FASSADE', 'HAUPT_FASSADEUNTERTE...', 'HAUPT_FLACHDACH', 'HAUPT_SCHRAEGDACH', 'HAUPT_STIRNBRETT',
];
const stats: [string, string][][] = [
  [['V', '5966'], ['E', '11835'], ['T1', '5735']],
  [['Q', '2517'], ['T2', '701'], ['P', '3218']],
];

function Stat({ name, value }: { name: string; value: string }) {
  return (
    <>
      <StatLabel htmlFor={`stat-${name}`}>{name}</StatLabel>
      <StatField id={`stat-${name}`} readOnly value={value} />
    </>
  );
}

const RoundMark = ({ label, color, children }: { label: string; color: string; children: React.ReactNode }) => (
  <Mark type="button" aria-label={label}>
    <svg width="24" height="24" viewBox="0 0 24 24" fill="none">
      <rect x="1" y="1" width="22" height="22" rx="10" stroke={color} strokeWidth="1.500" />
      {children}
    </svg>
  </Mark>
);
const GreenTick = () => <path d="M4 12h4l2 3q3-7 9-9-5 6-9 13h-1z" fill="#00b020" stroke="#204020" strokeWidth="0.500" />;

export default function App() {
  const [view, setView] = useState(1);
  const [focal, setFocal] = useState('316.479617');

  return (
    <Window>
      <GlobalStyle />
      <TitleBar>
        <svg width="14" height="14" viewBox="0 0 14 14" aria-hidden="true">
          <circle cx="6" cy="7" r="6" fill="#1818b0" />
          <path d="M1 4l4-2 2 3-3 3-3 0zM5 9l4 1-2 3z" fill="#10a030" />
          <path d="M9 3l3-2v9h-3z" fill="#f01010" />
        </svg>
        <Title>AccuTrans 3D - Version 2012.1.0 - [Buildings_DHM.dxf]</Title>
        <WindowButton aria-label="Minimize">
          <svg width="9" height="8"><path d="M1 7h5" stroke="#000" strokeWidth="2" /></svg>
        </WindowButton>
        <WindowButton aria-label="Restore">
          <svg width="9" height="9" fill="none" stroke="#000"><path d="M3 3v-2.500h5.500v4h-2M3 1h5M0.500 4.500h5v4h-5zM0 4h6" /></svg>
        </WindowButton>
        <WindowButton aria-label="Close" $apart>
          <svg width="9" height="8"><path d="M1 0l7 7M8 0l-7 7" stroke="#000" strokeWidth="2" /></svg>
        </WindowButton>
      </TitleBar>
      <MenuBar>
        {menus.map(m => <MenuItem key={m} type="button" $raised={m === 'Clipboard'}>{m}</MenuItem>)}
      </MenuBar>
      <Body>
        <Workspace>
          <Toolbar>
            <ToolGrid $gap={3}>
              {topTools.map(t => <ToolTile key={String(t.at)} {...t} />)}
            </ToolGrid>
          </Toolbar>
          <Middle>
            <SideBar>
              <SideGrid>
                {sideTools.map((t, i) => <ToolTile key={i} {...t} at={[(i % 2) + 1, Math.floor(i / 2) + 1]} />)}
                {Array.from({ length: 12 }, (_, i) => (
                  <NumberTile
                    key={i}
                    type="button"
                    $on={view === i + 1}
                    $col={(i % 2) + 1}
                    $row={Math.floor(i / 2) + 7}
                    onClick={() => setView(i + 1)}
                  >
                    {i + 1}
                  </NumberTile>
                ))}
                {sideLower.map((t, i) => <ToolTile key={i} {...t} at={[(i % 2) + 1, Math.floor(i / 2) + 13]} />)}
              </SideGrid>
            </SideBar>
            <Viewport><Model /></Viewport>
          </Middle>
          <BottomPanel>
            <ToolGrid $gap={4}>
              {bottomTools.map(t => <ToolTile key={String(t.at)} {...t} />)}
              <StageMeshTile type="button" $col={3} $row={2}>
                <Line $size={9} $lh={11}>Stage</Line>
                <GridMesh />
              </StageMeshTile>
              <FocalField aria-label="Focal distance" value={focal} onChange={e => setFocal(e.target.value)} />
              <AngleField aria-label="Field of view" readOnly value="30.0" />
            </ToolGrid>
            <StatusBar>
              <StatusMessage />
              <StatusCell $w={22} />
              <StatusCell $w={22} />
              <StatusCell $w={22} />
              <StatusCell $w={33}>23.8</StatusCell>
              <StatusCell $w={36}>-0.9</StatusCell>
              <StatusCell $w={34}>42.8</StatusCell>
            </StatusBar>
          </BottomPanel>
        </Workspace>
        <Inspector>
          <Tabs role="tablist">
            <Tab type="button" role="tab" aria-selected="true" $active>Layers</Tab>
            <Tab type="button" role="tab" aria-selected="false">Edit</Tab>
          </Tabs>
          <TabPage role="tabpanel">
            <LayerList>
              <LayerRows role="presentation">
                {layers.map(l => <Layer key={l}><Tick />{l}</Layer>)}
              </LayerRows>
            </LayerList>
            <MarkRow>
              <RoundMark label="Show all layers" color="#f05050"><GreenTick /></RoundMark>
              <RoundMark label="Hide all layers" color="#f05050">
                <GreenTick /><path d="M4 4l16 16" stroke="#f01010" strokeWidth="1.500" />
              </RoundMark>
              <RoundMark label="Sort by name" color={blue}>
                <path d="M8 17v-10l8 10v-10" stroke="#101030" strokeWidth="2" />
              </RoundMark>
              <RoundMark label="Sort by type" color={blue}>
                <path d="M6 8h12M12 8v10" stroke="#101030" strokeWidth="2" />
              </RoundMark>
              <RoundMark label="Move layer" color={blue}>
                <path d="M6 6v10h7" stroke="#101030" strokeWidth="2" />
                <path d="M10 9h7v8M14 14l3 3 3-3" stroke="#f02020" strokeWidth="1.500" />
              </RoundMark>
              <Mark type="button" aria-label="Layer tree">
                <svg width="22" height="24" viewBox="0 0 22 24" fill="none">
                  <path d="M3 2v20h5M3 2h7v11h8M10 9h8M10 3v6" stroke={blue} />
                  <path d="M0 1h5v3h-5zM8 3h4v4h-4zM16 8h4v4h-4zM16 13h4v4h-4zM6 19h5v4h-5z" fill="#f000f0" />
                </svg>
              </Mark>
              <StatRow $single><Stat name="L" value="12" /></StatRow>
            </MarkRow>
            {stats.map((row, i) => (
              <StatRow key={i}>{row.map(([n, v]) => <Stat key={n} name={n} value={v} />)}</StatRow>
            ))}
            <Group>
              <Legend>Align Surface Normals (Flip Polygons)</Legend>
              <SelectWrap>
                <Select aria-label="Surface to align"><option value=""></option></Select>
                <Arrow><svg width="7" height="4"><path d="M0 0h7l-3.500 4z" fill={dark} /></svg></Arrow>
              </SelectWrap>
              <FieldPair><EmptyField /><EmptyField /></FieldPair>
              <AlignRow>{alignTools.map((t, i) => <ToolTile key={i} {...t} />)}</AlignRow>
            </Group>
          </TabPage>
          <Filler />
        </Inspector>
      </Body>
      <WindowEdge />
    </Window>
  );
}
